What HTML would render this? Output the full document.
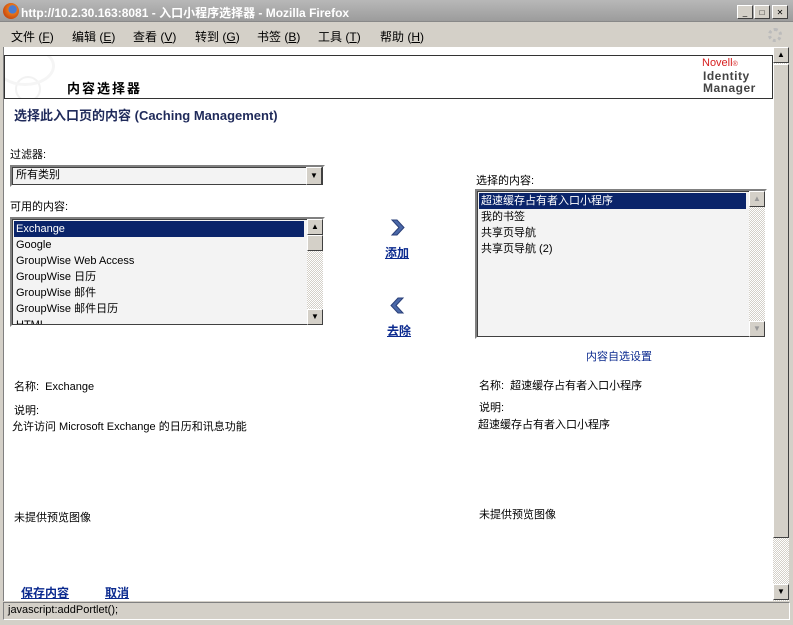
<!DOCTYPE html>
<html><head><meta charset="utf-8"><style>
*{margin:0;padding:0;box-sizing:border-box}
body{width:793px;height:625px;overflow:hidden;background:#d4d0c8;font-family:"Liberation Sans","Noto Sans CJK SC",sans-serif;font-size:11px;color:#000;position:relative}
.a{position:absolute;white-space:nowrap}
.title{left:0;top:0;width:793px;height:22px;background:linear-gradient(#b8b8b8,#9c9c9c);border-bottom:1px solid #888}
.link{color:#0b2a8f;text-decoration:underline;font-weight:bold;font-size:12px}
.list{background:#f3f3f3;border:2px solid;border-color:#808080 #fff #fff #808080;outline:1px solid #404040;outline-offset:-3px}
.sb{background:repeating-conic-gradient(#d4d0c8 0 25%,#fff 0 50%) 0 0/2px 2px}
.btn{background:#d4d0c8;border:1px solid;border-color:#fff #404040 #404040 #fff;width:16px;height:16px;font-size:8px;text-align:center;line-height:14px}
.it{height:16px;line-height:16px;padding-left:2px;font-size:11px}
.sel{background:#0a246a;color:#fff}
</style></head><body>
<div class="a title"></div>
<div class="a" style="left:3px;top:3px;width:16px;height:16px;border-radius:50%;background:radial-gradient(circle at 60% 40%,#4a7bd0 30%,#e8761a 32%,#c2410c 80%)"></div>
<div class="a" style="left:21px;top:4px;color:#fff;font-weight:bold;font-size:12px">http://10.2.30.163:8081 - 入口小程序选择器 - Mozilla Firefox</div>
<div class="a btn" style="left:737px;top:5px;width:16px;height:14px">_</div>
<div class="a btn" style="left:754px;top:5px;width:16px;height:14px">□</div>
<div class="a btn" style="left:772px;top:5px;width:16px;height:14px">✕</div>
<div class="a" style="left:11px;top:28px;font-size:12px">文件 (<u>F</u>)</div>
<div class="a" style="left:72px;top:28px;font-size:12px">编辑 (<u>E</u>)</div>
<div class="a" style="left:133px;top:28px;font-size:12px">查看 (<u>V</u>)</div>
<div class="a" style="left:195px;top:28px;font-size:12px">转到 (<u>G</u>)</div>
<div class="a" style="left:257px;top:28px;font-size:12px">书签 (<u>B</u>)</div>
<div class="a" style="left:318px;top:28px;font-size:12px">工具 (<u>T</u>)</div>
<div class="a" style="left:380px;top:28px;font-size:12px">帮助 (<u>H</u>)</div>
<div class="a" style="left:768px;top:28px;width:14px;height:14px;border-radius:50%;border:3px dotted #bbb"></div>
<div class="a" style="left:3px;top:47px;width:770px;height:554px;background:#fff;border-left:1px solid #808080"></div>
<div class="a sb" style="left:773px;top:47px;width:16px;height:554px"></div>
<div class="a btn" style="left:773px;top:47px">▲</div>
<div class="a btn" style="left:773px;top:64px;height:474px"></div>
<div class="a btn" style="left:773px;top:584px">▼</div>
<div class="a" style="left:4px;top:55px;width:769px;height:44px;border:1px solid #333;background:#fff;overflow:hidden"><div style="position:absolute;left:10px;top:20px;width:26px;height:26px;border-radius:50%;border:2px solid #f2f2f2"></div><div style="position:absolute;left:-10px;top:-10px;width:60px;height:40px;border-radius:50%;border:3px solid #f5f5f5"></div></div>
<div class="a" style="left:67px;top:78px;font-weight:bold;font-size:13px;letter-spacing:2px">内容选择器</div>
<div class="a" style="left:702px;top:57px;color:#d62020;font-size:11px">Novell<span style="font-size:7px">®</span></div>
<div class="a" style="left:703px;top:70px;color:#444;font-size:12px;line-height:12px;font-weight:bold;letter-spacing:0.5px">Identity<br>Manager</div>
<div class="a" style="left:14px;top:105px;font-weight:bold;font-size:13px;color:#1f2a5a">选择此入口页的内容 (Caching Management)</div>
<div class="a" style="left:10px;top:146px">过滤器:</div>
<div class="a list" style="left:10px;top:165px;width:315px;height:22px"><div class="it" style="line-height:17px;padding-left:4px">所有类别</div></div>
<div class="a btn" style="left:306px;top:167px;height:18px;line-height:16px">▼</div>
<div class="a" style="left:10px;top:198px">可用的内容:</div>
<div class="a list" style="left:10px;top:217px;width:315px;height:110px;padding:2px 19px 0 2px;overflow:hidden">
<div class="it sel">Exchange</div><div class="it">Google</div><div class="it">GroupWise Web Access</div><div class="it">GroupWise 日历</div><div class="it">GroupWise 邮件</div><div class="it">GroupWise 邮件日历</div><div class="it">HTML</div></div>
<div class="a sb" style="left:307px;top:219px;width:16px;height:106px"></div>
<div class="a btn" style="left:307px;top:219px">▲</div>
<div class="a btn" style="left:307px;top:235px"></div>
<div class="a btn" style="left:307px;top:309px">▼</div>
<svg class="a" style="left:390px;top:219px" width="16" height="17" viewBox="0 0 16 17"><path d="M2 1 L7 1 L14 8.5 L7 16 L2 16 L9 8.5 Z" fill="#4a68a8" stroke="#2a3f78" stroke-width="1"/></svg>
<div class="a link" style="left:385px;top:244px">添加</div>
<svg class="a" style="left:389px;top:297px" width="16" height="17" viewBox="0 0 16 17"><path d="M14 1 L9 1 L2 8.5 L9 16 L14 16 L7 8.5 Z" fill="#4a68a8" stroke="#2a3f78" stroke-width="1"/></svg>
<div class="a link" style="left:387px;top:322px">去除</div>
<div class="a" style="left:476px;top:172px">选择的内容:</div>
<div class="a list" style="left:475px;top:189px;width:292px;height:150px;padding:2px 19px 0 2px">
<div class="it sel">超速缓存占有者入口小程序</div><div class="it">我的书签</div><div class="it">共享页导航</div><div class="it">共享页导航 (2)</div></div>
<div class="a sb" style="left:749px;top:191px;width:16px;height:146px"></div>
<div class="a btn" style="left:749px;top:191px;color:#999">▲</div>
<div class="a btn" style="left:749px;top:321px;color:#999">▼</div>
<div class="a" style="left:586px;top:348px;color:#0b2a8f">内容自选设置</div>
<div class="a" style="left:14px;top:378px">名称:&nbsp;&nbsp;Exchange</div>
<div class="a" style="left:14px;top:402px">说明:</div>
<div class="a" style="left:12px;top:418px">允许访问 Microsoft Exchange 的日历和讯息功能</div>
<div class="a" style="left:14px;top:509px">未提供预览图像</div>
<div class="a" style="left:479px;top:377px">名称:&nbsp;&nbsp;超速缓存占有者入口小程序</div>
<div class="a" style="left:479px;top:399px">说明:</div>
<div class="a" style="left:478px;top:416px">超速缓存占有者入口小程序</div>
<div class="a" style="left:479px;top:506px">未提供预览图像</div>
<div class="a link" style="left:21px;top:584px">保存内容</div>
<div class="a link" style="left:105px;top:584px">取消</div>
<div class="a" style="left:3px;top:602px;width:787px;height:18px;border:1px solid;border-color:#808080 #fff #fff #808080"></div>
<div class="a" style="left:8px;top:604px;font-size:11px">javascript:addPortlet();</div>
</body></html>
